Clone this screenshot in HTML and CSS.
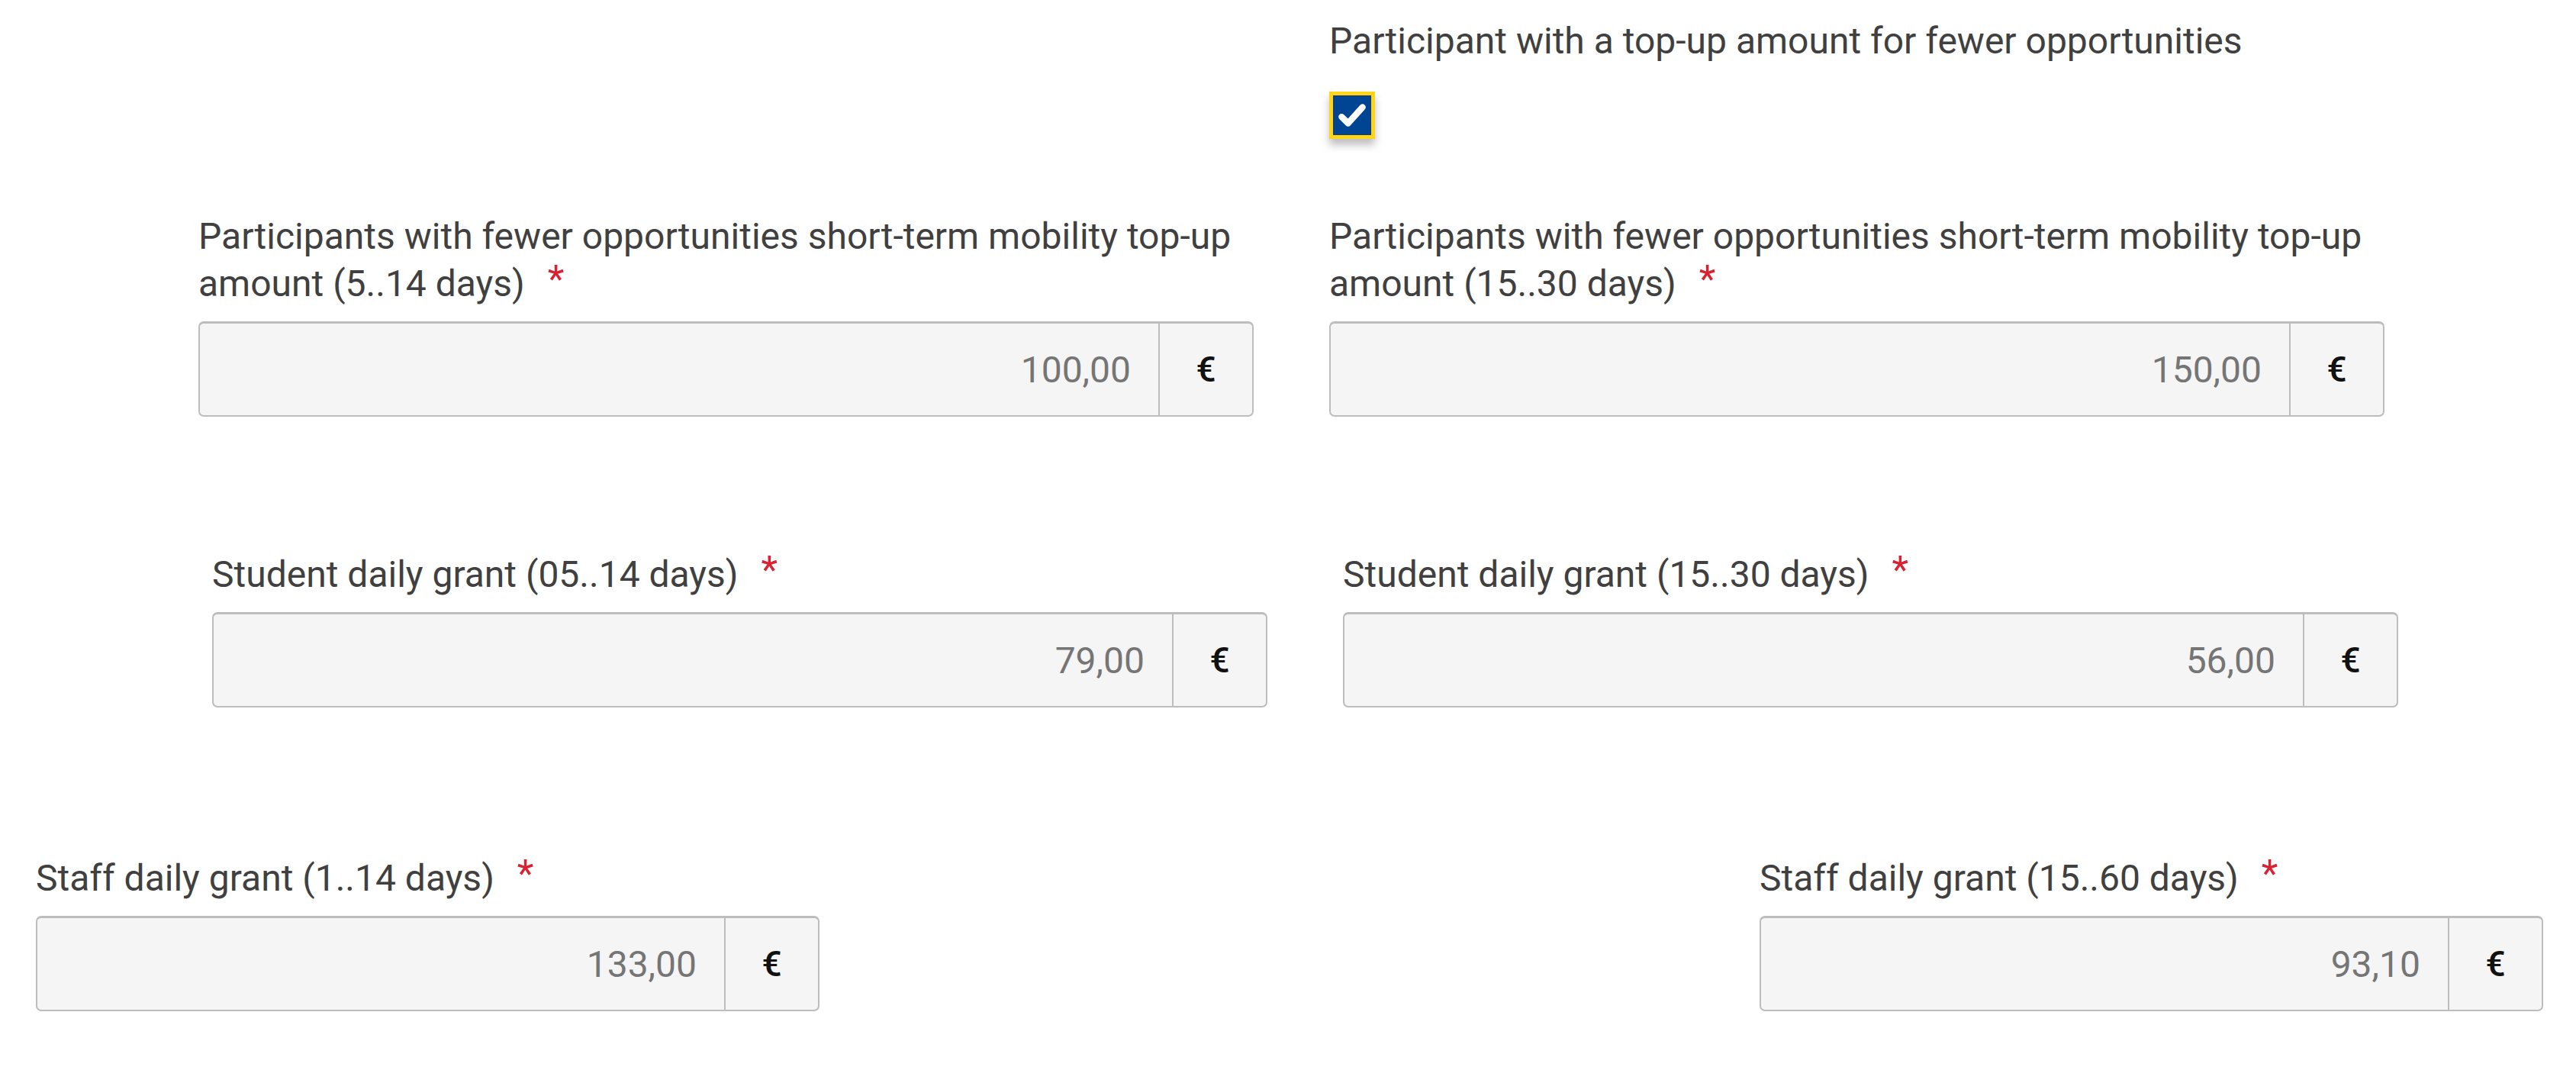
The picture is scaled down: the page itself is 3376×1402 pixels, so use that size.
FILE: index.html
```html
<!DOCTYPE html>
<html lang="en">
<head>
    <meta charset="UTF-8">
    <meta name="viewport" content="width=device-width, initial-scale=1.0">
    <title>Grant amounts</title>
    <link rel="stylesheet" href="styles.css">
</head>
<body>

<div class="page">
    <!-- Fewer opportunities switch -->
    <div class="grid grid-top">
        <div></div>
        <div class="field">
            <div class="label">Participant with a top-up amount for fewer opportunities</div>
            <div class="checkbox">
                <div class="checkbox-inner">
                    <svg viewBox="0 0 40 40" width="42" height="42">
                        <polyline points="7,22 15,30 33,10" fill="none" stroke="#fff" stroke-width="8" stroke-linecap="round" stroke-linejoin="round"/>
                    </svg>
                </div>
            </div>
        </div>
    </div>

    <!-- Top-up amounts -->
    <div class="grid grid-topup">
        <div class="field">
            <div class="label">Participants with fewer opportunities short-term mobility top-up amount (5..14 days)<span class="req">*</span></div>
            <div class="input-group">
                <div class="input">100,00</div>
                <div class="suffix">€</div>
            </div>
        </div>
        <div class="field">
            <div class="label">Participants with fewer opportunities short-term mobility top-up amount (15..30 days)<span class="req">*</span></div>
            <div class="input-group">
                <div class="input">150,00</div>
                <div class="suffix">€</div>
            </div>
        </div>
    </div>

    <!-- Student grants -->
    <div class="grid grid-student">
        <div class="field">
            <div class="label">Student daily grant (05..14 days)<span class="req">*</span></div>
            <div class="input-group">
                <div class="input">79,00</div>
                <div class="suffix">€</div>
            </div>
        </div>
        <div class="field">
            <div class="label">Student daily grant (15..30 days)<span class="req">*</span></div>
            <div class="input-group">
                <div class="input">56,00</div>
                <div class="suffix">€</div>
            </div>
        </div>
    </div>

    <!-- Staff grants -->
    <div class="staff-row">
        <div class="field field-small">
            <div class="label">Staff daily grant (1..14 days)<span class="req">*</span></div>
            <div class="input-group">
                <div class="input">133,00</div>
                <div class="suffix">€</div>
            </div>
        </div>
        <div class="field field-small">
            <div class="label">Staff daily grant (15..60 days)<span class="req">*</span></div>
            <div class="input-group">
                <div class="input">93,10</div>
                <div class="suffix">€</div>
            </div>
        </div>
    </div>
</div>

</body>
</html>
```

FILE: styles.css
```css
/* Global Styles */
body {
    font-family: 'Roboto', 'Liberation Sans', sans-serif;
    background-color: #ffffff;
    color: #404040;
    margin: 0;
}

.page {
    padding-top: 23px;
}

/* Rows */
.grid {
    display: grid;
    grid-template-columns: 1383px 1383px;
    column-gap: 99px;
}

.grid-top {
    padding-left: 260px;
}

.grid-topup {
    padding-left: 260px;
    margin-top: 97px;
}

.grid-student {
    padding-left: 278px;
    margin-top: 176px;
}

.staff-row {
    display: flex;
    justify-content: space-between;
    padding: 0 43px 0 47px;
    margin-top: 193px;
}

.field-small {
    width: 1027px;
}

/* Labels */
.label {
    font-size: 48px;
    line-height: 62px;
    color: #404040;
}

.req {
    display: inline-block;
    color: #da2131;
    margin-left: 30px;
    font-size: 50px;
    line-height: 1;
    vertical-align: top;
}

/* Checkbox */
.checkbox {
    width: 50px;
    height: 52px;
    margin-top: 35px;
    padding: 5px;
    background-color: #ffd617;
    box-shadow: 0 8px 10px rgba(0, 0, 0, 0.25);
}

.checkbox-inner {
    height: 100%;
    background-color: #004494;
    border: 1px solid #1b3a6b;
    box-sizing: border-box;
    display: flex;
    align-items: center;
    justify-content: center;
}

/* Input group */
.input-group {
    display: flex;
    height: 125px;
    margin-top: 18px;
    background-color: #f5f5f5;
    border: 2px solid #bdbdbd;
    border-top-width: 3px;
    border-radius: 7px;
    box-sizing: border-box;
}

.input {
    flex: 1;
    display: flex;
    align-items: center;
    justify-content: flex-end;
    padding-right: 36px;
    font-size: 48px;
    color: #757575;
}

.suffix {
    width: 121px;
    display: flex;
    align-items: center;
    justify-content: center;
    border-left: 2px solid #bdbdbd;
    font-size: 46px;
    font-weight: 500;
    color: #111;
}
```
